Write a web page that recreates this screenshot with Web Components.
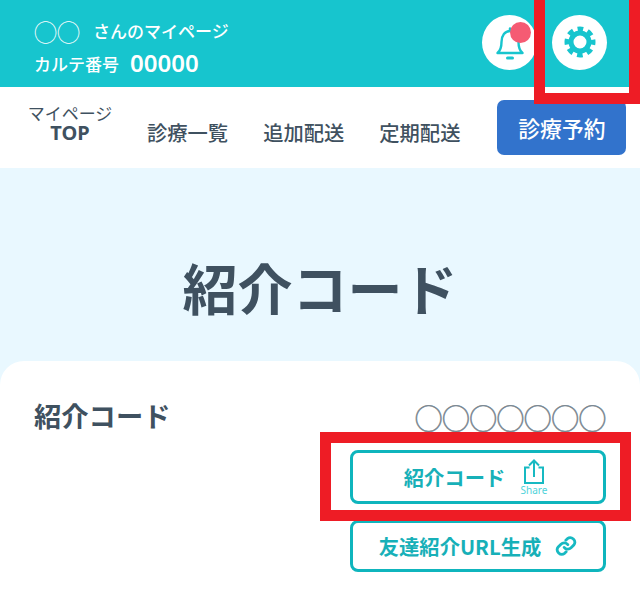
<!DOCTYPE html>
<html lang="ja">
<head>
<meta charset="utf-8">
<title>紹介コード</title>
<style>
  html, body { margin: 0; padding: 0; }
  body {
    width: 640px;
    height: 589px;
    overflow: hidden;
    position: relative;
    background: #e9f8ff;
    font-family: "Noto Sans CJK JP", "Noto Sans", sans-serif;
    color: #3f5160;
  }
</style>
</head>
<body>
<top-header></top-header>
<main-nav></main-nav>
<page-title>紹介コード</page-title>
<code-card></code-card>
<red-mark style="left:534px;top:-11px;width:106px;height:115px"></red-mark>
<red-mark style="left:320px;top:432px;width:311px;height:89px"></red-mark>

<script>
class TopHeader extends HTMLElement {
  constructor() {
    super();
    this.attachShadow({ mode: 'open' });
    this.shadowRoot.innerHTML = `
      <style>
        :host { display: flex; height: 87px; background: #17c5ce; color: #fff; padding: 0 33px 0 34px; align-items: center; justify-content: space-between; box-sizing: border-box; }
        .who { display: flex; flex-direction: column; gap: 3px; margin-top: 7px; }
        .line { display: flex; align-items: center; height: 30px; font-weight: 500; font-size: 17px; line-height: 30px; white-space: nowrap; }
        .name { font-size: 23px; font-weight: 400; margin-right: 13px; }
        .num { font-size: 24px; margin: -1px 0 0 11px; font-family: "Noto Sans", sans-serif; font-weight: 600; }
        .icons { display: flex; gap: 15px; margin-top: -3px; }
        .round { width: 55px; height: 55px; border-radius: 50%; background: #fff; position: relative; display: flex; align-items: center; justify-content: center; }
        .dot { position: absolute; width: 21px; height: 21px; border-radius: 50%; background: #f55b73; left: 28px; top: 7px; }
        svg { display: block; }
      </style>
      <div class="who">
        <div class="line"><span class="name">◯◯</span>さんのマイページ</div>
        <div class="line">カルテ番号<span class="num">00000</span></div>
      </div>
      <div class="icons">
        <div class="round">
          <svg width="30" height="34" viewBox="0 0 30 34" fill="none" stroke="#17c5ce" stroke-width="2.400" stroke-linejoin="round" stroke-linecap="round" style="margin:3px 0 0 1px">
            <path d="M2.500 26c2.500-2 4-4.500 4-11C6.500 8.500 10 4 15 4s8.500 4.500 8.500 11c0 6.500 1.500 9 4 11z"/>
            <path d="M15 1.500V4"/>
            <path d="M12.500 31h5" stroke-width="3"/>
          </svg>
          <span class="dot"></span>
        </div>
        <div class="round">
          <svg width="32" height="32" viewBox="0 0 32 32" fill="none" stroke="#17c5ce">
            <circle cx="16" cy="16" r="9" stroke-width="5"/>
            <circle cx="16" cy="16" r="13" stroke-width="5" stroke-dasharray="5.600 4.610" stroke-dashoffset="2.800"/>
          </svg>
        </div>
      </div>
    `;
  }
}

class MainNav extends HTMLElement {
  constructor() {
    super();
    this.attachShadow({ mode: 'open' });
    this.shadowRoot.innerHTML = `
      <style>
        :host { display: flex; height: 81px; background: #fff; box-sizing: border-box; padding: 0 14px 0 28px; align-items: flex-start; font-size: 20.300px; font-weight: 500; color: #3f5160; }
        .top { display: flex; flex-direction: column; align-items: center; margin-top: 16px; width: 84px; flex: none; white-space: nowrap; }
        .top small { font-size: 17px; font-weight: 400; line-height: 20px; }
        .top b { font-size: 20px; line-height: 20px; font-weight: 700; font-family: "Noto Sans", sans-serif; }
        a { margin-top: 30px; line-height: 30px; white-space: nowrap; flex: none; }
        .first { margin-left: 35px; }
        .next { margin-left: 35px; }
        .book { margin: 13px 0 0 37px; width: 129px; height: 55px; flex: none; border-radius: 7px; background: #3273cc; color: #fff; font-size: 21.800px; display: flex; align-items: center; justify-content: center; }
      </style>
      <div class="top"><small>マイページ</small><b>TOP</b></div>
      <a class="first">診療一覧</a>
      <a class="next">追加配送</a>
      <a class="next">定期配送</a>
      <div class="book">診療予約</div>
    `;
  }
}

class PageTitle extends HTMLElement {
  constructor() {
    super();
    this.attachShadow({ mode: 'open' });
    this.shadowRoot.innerHTML = `
      <style>
        :host { display: flex; height: 193px; align-items: center; justify-content: center; box-sizing: border-box; padding-top: 42px; font-size: 55px; font-weight: 700; color: #3f5160; }
      </style>
      <slot></slot>
    `;
  }
}

class CodeCard extends HTMLElement {
  constructor() {
    super();
    this.attachShadow({ mode: 'open' });
    this.shadowRoot.innerHTML = `
      <style>
        :host { display: block; background: #fff; border-radius: 24px 24px 0 0; height: 228px; box-sizing: border-box; padding: 36px 34px 0; }
        .row { display: flex; justify-content: space-between; }
        h2 { margin: -2px 0 0; font-size: 27.300px; line-height: 40px; font-weight: 700; color: #3f5160; }
        .right { display: flex; flex-direction: column; align-items: flex-end; }
        .code { font-size: 27.300px; line-height: 40px; color: #77858f; margin-bottom: 13px; -webkit-text-stroke: 0.500px #77858f; }
        .stack { display: flex; flex-direction: column; gap: 16px; }
      </style>
      <div class="row">
        <h2>紹介コード</h2>
        <div class="right">
          <div class="code">◯◯◯◯◯◯◯</div>
          <div class="stack">
            <action-button style="height:54px;--gap:14px;--shift:3px">紹介コード
              <svg slot="icon" width="30" height="38" viewBox="0 0 30 38" fill="none" stroke="#17b9c2" stroke-width="2">
                <path d="M10.500 9.500H6V25h18V9.500h-4.500"/>
                <path d="M15 19V2.500M10 7.500l5-5 5 5"/>
                <text x="15" y="36" font-size="10" text-anchor="middle" fill="#4fd3da" stroke="none" font-weight="400" font-family="Noto Sans, sans-serif">Share</text>
              </svg>
            </action-button>
            <action-button style="height:52px;--gap:14px">友達紹介URL生成
              <svg slot="icon" width="22" height="22" viewBox="0 0 24 24" fill="none" stroke="#17b9c2" stroke-width="3" stroke-linecap="round">
                <path d="M10 13.500a5 5 0 0 0 7.500.5l3-3a5 5 0 0 0-7-7l-1.700 1.700"/>
                <path d="M14 10.500a5 5 0 0 0-7.500-.5l-3 3a5 5 0 0 0 7 7l1.700-1.700"/>
              </svg>
            </action-button>
          </div>
        </div>
      </div>
    `;
  }
}

class ActionButton extends HTMLElement {
  constructor() {
    super();
    this.attachShadow({ mode: 'open' });
    this.shadowRoot.innerHTML = `
      <style>
        :host { display: flex; width: 256px; box-sizing: border-box; border: 3px solid #0fb5bd; border-radius: 8px; background: #fff; color: #17b0b8; font-size: 20.300px; font-weight: 700; align-items: center; justify-content: center; gap: var(--gap, 18px); padding-right: var(--shift, 0); }
        ::slotted(svg) { display: block; }
      </style>
      <span><slot></slot></span>
      <slot name="icon"></slot>
    `;
  }
}

class RedMark extends HTMLElement {
  constructor() {
    super();
    this.attachShadow({ mode: 'open' });
    this.shadowRoot.innerHTML = `
      <style>
        :host { display: block; position: absolute; box-sizing: border-box; border: 11px solid #ee1c25; pointer-events: none; }
      </style>
    `;
  }
}

customElements.define('top-header', TopHeader);
customElements.define('main-nav', MainNav);
customElements.define('page-title', PageTitle);
customElements.define('code-card', CodeCard);
customElements.define('action-button', ActionButton);
customElements.define('red-mark', RedMark);
</script>
</body>
</html>
